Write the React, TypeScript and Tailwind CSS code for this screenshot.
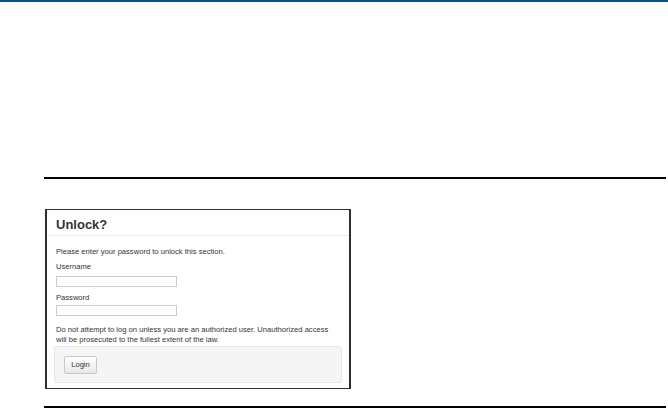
export default function App() {
  return (
    <div className="min-h-[418px] bg-white font-['Liberation_Sans',Arial,sans-serif] text-[#333]">
      {/* top accent bar */}
      <div className="h-[2px] bg-[#00518f]" />

      <div className="pl-[44px] pr-[2px] pt-[175px]">
        <div className="h-[2px] bg-black" />

        {/* screenshot of the unlock dialog */}
        <div className="ml-[1px] mt-[30px] w-[306px] h-[180px] border border-l-2 border-r-2 border-[#2e2e2e] bg-white flex flex-col">
          <div className="h-[26px] border-b border-[#eee] pl-[9px] flex items-end pb-[4px]">
            <h1 className="text-[13px] font-bold leading-none">Unlock?</h1>
          </div>
          <div className="px-[9px] pt-[10px] text-[7.6px] leading-[11px]">
            <p>Please enter your password to unlock this section.</p>
            <p className="mt-[4px]">Username</p>
            <div className="mt-[4px] w-[121px] h-[11px] border border-[#ccc] bg-white" />
            <p className="mt-[5px]">Password</p>
            <div className="mt-[2px] w-[121px] h-[11px] border border-[#ccc] bg-white" />
            <p className="mt-[9px] max-w-[282px] leading-[10px]">
              Do not attempt to log on unless you are an authorized user. Unauthorized access will be prosecuted to the fullest extent of the law.
            </p>
          </div>
          <div className="mx-[7px] mt-[1px] h-[37px] rounded-[2px] border border-[#e6e6e6] bg-[#f5f5f5] px-[9px] flex items-center">
            <button className="w-[33px] h-[18px] border border-[#c8c8c8] rounded-[2px] bg-gradient-to-b from-white to-[#e8e8e8] text-[7.6px] text-[#333]">
              Login
            </button>
          </div>
        </div>

        <div className="mt-[17px] h-[2px] bg-black" />
      </div>
    </div>
  )
}
